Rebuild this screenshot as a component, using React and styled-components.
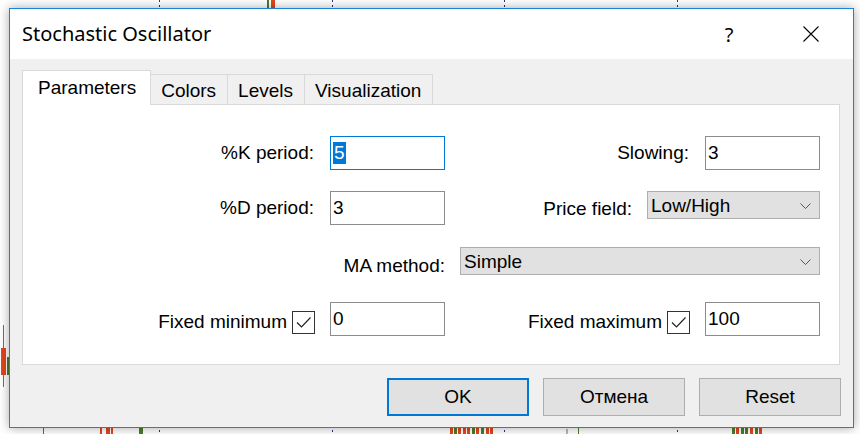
import React from 'react';
import styled, { createGlobalStyle } from 'styled-components';

const GlobalStyle = createGlobalStyle`
    html, body {
        margin: 0;
        padding: 0;
        background: #ffffff;
        overflow: hidden;
    }
    * {
        box-sizing: border-box;
    }
`;

const Desktop = styled.div`
    position: relative;
    width: 860px;
    height: 434px;
    overflow: hidden;
    background: #ffffff;
    padding: 8px 0 0 9px;
    font-family: "Liberation Sans", Arial, sans-serif;
    color: #000;
`;

const GridLine = styled.div`
    position: absolute;
    top: 0;
    bottom: 0;
    width: 1px;
    background: repeating-linear-gradient(to bottom, #2e2e8a 0 2px, transparent 2px 5px);
`;

const Candle = styled.div`
    position: absolute;
    background: ${p => p.$color};
`;

const Dialog = styled.div`
    position: relative;
    z-index: 2;
    width: 845px;
    height: 420px;
    border: 1px solid #1883d7;
    background: #f0f0f0;
    box-shadow: 0 0 10px rgba(0, 0, 0, 0.35);
    display: flex;
    flex-direction: column;
`;

const TitleBar = styled.div`
    height: 50px;
    background: #ffffff;
    display: flex;
    align-items: center;
    padding-left: 12px;
`;

const Title = styled.div`
    flex: 1;
    font-family: "Noto Sans", "Open Sans", sans-serif;
    font-size: 20px;
    color: #000;
    padding-bottom: 1px;
`;

const CaptionButton = styled.div`
    width: ${p => p.$w}px;
    height: 50px;
    display: flex;
    align-items: center;
    justify-content: center;
    font-family: "Noto Sans", sans-serif;
    font-size: 20px;
`;

const Body = styled.div`
    flex: 1;
    display: flex;
    flex-direction: column;
    padding: 11px 13px 0 12px;
`;

const TabBar = styled.div`
    display: flex;
    align-items: flex-end;
    height: 34px;
`;

const Tab = styled.div`
    position: relative;
    z-index: ${p => (p.$active ? 2 : 1)};
    height: ${p => (p.$active ? 35 : 30)}px;
    margin-bottom: ${p => (p.$active ? -1 : 0)}px;
    margin-left: ${p => (p.$first ? 0 : -1)}px;
    padding: ${p => (p.$active ? '0 14px 1px 15px' : '3px 11px 0 10px')};
    display: flex;
    align-items: center;
    background: ${p => (p.$active ? '#ffffff' : '#f0f0f0')};
    border: 1px solid #d9d9d9;
    border-bottom: none;
    font-size: 19px;
    white-space: nowrap;
`;

const Panel = styled.div`
    height: 261px;
    background: #ffffff;
    border: 1px solid #d9d9d9;
    padding: 31px 19px 0 0;
    display: flex;
    flex-direction: column;
`;

const Row = styled.div`
    display: flex;
    height: ${p => p.$h}px;
    margin-top: ${p => p.$mt}px;
    justify-content: flex-end;
`;

const Group = styled.div`
    display: flex;
    align-items: ${p => p.$align || 'center'};
    justify-content: flex-end;
    width: ${p => (p.$w ? `${p.$w}px` : 'auto')};
    flex: ${p => (p.$w ? 'none' : 1)};
`;

const Label = styled.span`
    font-size: 19px;
    white-space: nowrap;
    margin-right: ${p => p.$gap}px;
    padding-top: ${p => p.$dy || 0}px;
`;

const TextBox = styled.div`
    width: 115px;
    height: ${p => p.$h || 34}px;
    border: 1px solid ${p => (p.$focused ? '#0078d7' : '#8c8c8c')};
    background: #ffffff;
    display: flex;
    align-items: center;
    padding: 0 0 1px 2px;
    font-size: 19px;
    line-height: 22px;
`;

const Selected = styled.span`
    background: #0078d7;
    color: #ffffff;
    padding: 0 1px;
`;

const Combo = styled.div`
    width: ${p => p.$w}px;
    height: 28px;
    border: 1px solid #adadad;
    background: #e1e1e1;
    display: flex;
    align-items: center;
    justify-content: space-between;
    padding: 1px 8px 0 3px;
    font-size: 19px;
`;

const CheckBox = styled.div`
    width: 23px;
    height: 23px;
    border: 1px solid #333333;
    background: #ffffff;
    display: flex;
    align-items: center;
    justify-content: center;
    margin: 6px 15px 0 0;
`;

const Footer = styled.div`
    display: flex;
    justify-content: flex-end;
    gap: 14px;
    margin: 13px -1px 0 0;
`;

const Button = styled.div`
    width: 142px;
    height: 38px;
    display: flex;
    align-items: center;
    justify-content: center;
    background: #e1e1e1;
    border: ${p => (p.$default ? '2px solid #0078d7' : '1px solid #adadad')};
    font-size: 19px;
`;

const Chevron = () => (
    <svg width="11" height="6" viewBox="0 0 11 6">
        <path d="M0.5 0.5 L5.5 5.5 L10.5 0.5" fill="none" stroke="#555" strokeWidth="1" />
    </svg>
);

const Check = () => (
    <svg width="19" height="17" viewBox="0 0 19 17">
        <path d="M3 8.5 L7.5 13 L16.5 3.5" fill="none" stroke="#222" strokeWidth="1.2" />
    </svg>
);

const CloseIcon = () => (
    <svg width="16" height="16" viewBox="0 0 16 16">
        <path d="M0.5 0.5 L15.5 15.5 M15.5 0.5 L0.5 15.5" stroke="#000" strokeWidth="1.1" />
    </svg>
);

const gridLines = [159, 332, 504, 677];

const candles = [
    { x: 267, y: 0, w: 2, h: 8, c: '#4a7d2a' },
    { x: 271, y: 0, w: 4, h: 8, c: '#e2461e' },
    { x: 3, y: 325, w: 1, h: 62, c: '#e2461e' },
    { x: 1, y: 348, w: 5, h: 27, c: '#e2461e' },
    { x: 7, y: 357, w: 3, h: 18, c: '#4a7d2a' },
    { x: 43, y: 427, w: 1, h: 7, c: '#4a7d2a' },
    { x: 100, y: 428, w: 2, h: 6, c: '#e2461e' },
    { x: 106, y: 427, w: 4, h: 7, c: '#e2461e' },
    { x: 111, y: 428, w: 2, h: 6, c: '#e2461e' },
    { x: 139, y: 427, w: 4, h: 7, c: '#4a7d2a' },
    { x: 450, y: 428, w: 3, h: 6, c: '#e2461e' },
    { x: 454, y: 428, w: 3, h: 6, c: '#4a7d2a' },
    { x: 458, y: 428, w: 3, h: 6, c: '#e2461e' },
    { x: 463, y: 428, w: 3, h: 6, c: '#e2461e' },
    { x: 467, y: 428, w: 3, h: 6, c: '#e2461e' },
    { x: 472, y: 428, w: 3, h: 6, c: '#4a7d2a' },
    { x: 476, y: 428, w: 3, h: 6, c: '#e2461e' },
    { x: 481, y: 428, w: 3, h: 6, c: '#4a7d2a' },
    { x: 486, y: 428, w: 3, h: 6, c: '#e2461e' },
    { x: 490, y: 428, w: 3, h: 6, c: '#e2461e' },
    { x: 566, y: 429, w: 2, h: 5, c: '#a7c49a' },
    { x: 578, y: 428, w: 1, h: 6, c: '#4a7d2a' },
    { x: 732, y: 428, w: 3, h: 6, c: '#4a7d2a' },
    { x: 736, y: 428, w: 3, h: 6, c: '#e2461e' },
    { x: 741, y: 428, w: 3, h: 6, c: '#4a7d2a' },
    { x: 745, y: 428, w: 3, h: 6, c: '#4a7d2a' },
    { x: 750, y: 428, w: 3, h: 6, c: '#e2461e' },
    { x: 755, y: 428, w: 3, h: 6, c: '#4a7d2a' },
    { x: 759, y: 428, w: 3, h: 6, c: '#e2461e' },
];

function App() {
    return (
        <>
            <GlobalStyle />
            <Desktop>
                {gridLines.map(x => (
                    <GridLine key={x} style={{ left: x }} />
                ))}
                {candles.map((c, i) => (
                    <Candle key={i} $color={c.c} style={{ left: c.x, top: c.y, width: c.w, height: c.h }} />
                ))}

                <Dialog>
                    <TitleBar>
                        <Title>Stochastic Oscillator</Title>
                        <CaptionButton $w={80}>?</CaptionButton>
                        <CaptionButton $w={84}><CloseIcon /></CaptionButton>
                    </TitleBar>

                    <Body>
                        <TabBar>
                            <Tab $active $first>Parameters</Tab>
                            <Tab>Colors</Tab>
                            <Tab>Levels</Tab>
                            <Tab>Visualization</Tab>
                        </TabBar>

                        <Panel>
                            <Row $h={34} $mt={0}>
                                <Group $w={422}>
                                    <Label $gap={16}>%K period:</Label>
                                    <TextBox $focused><Selected>5</Selected></TextBox>
                                </Group>
                                <Group>
                                    <Label $gap={16}>Slowing:</Label>
                                    <TextBox>3</TextBox>
                                </Group>
                            </Row>

                            <Row $h={34} $mt={21}>
                                <Group $w={422}>
                                    <Label $gap={16}>%D period:</Label>
                                    <TextBox>3</TextBox>
                                </Group>
                                <Group $align="flex-start">
                                    <Label $gap={15} $dy={7}>Price field:</Label>
                                    <Combo $w={173}>Low/High<Chevron /></Combo>
                                </Group>
                            </Row>

                            <Row $h={28} $mt={22}>
                                <Group>
                                    <Label $gap={15} $dy={10}>MA method:</Label>
                                    <Combo $w={360}>Simple<Chevron /></Combo>
                                </Group>
                            </Row>

                            <Row $h={34} $mt={27}>
                                <Group $w={422}>
                                    <Label $gap={5} $dy={6}>Fixed minimum</Label>
                                    <CheckBox><Check /></CheckBox>
                                    <TextBox>0</TextBox>
                                </Group>
                                <Group>
                                    <Label $gap={5} $dy={6}>Fixed maximum</Label>
                                    <CheckBox><Check /></CheckBox>
                                    <TextBox>100</TextBox>
                                </Group>
                            </Row>
                        </Panel>

                        <Footer>
                            <Button $default>OK</Button>
                            <Button>Отмена</Button>
                            <Button>Reset</Button>
                        </Footer>
                    </Body>
                </Dialog>
            </Desktop>
        </>
    );
}

export default App;
